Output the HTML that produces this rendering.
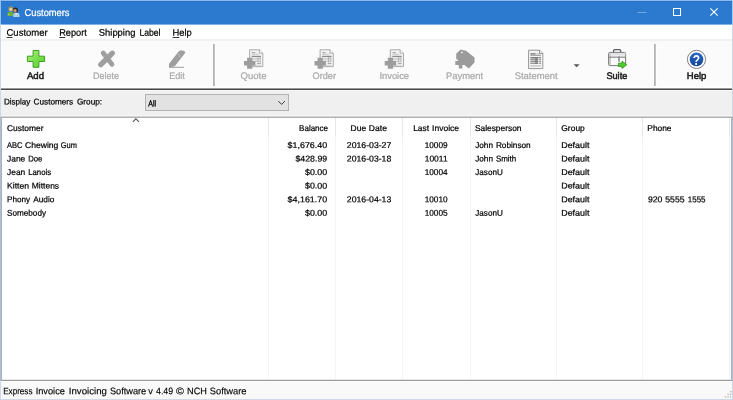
<!DOCTYPE html>
<html lang="en">
<head>
<meta charset="utf-8">
<title>Customers</title>
<style>
html,body{margin:0;padding:0;background:#f0f0f0;}
body{width:733px;height:400px;overflow:hidden;font-family:"Liberation Sans",sans-serif;}
#win{position:relative;width:733px;height:400px;overflow:hidden;background:#f0f0f0;}
#win div,#win svg{position:absolute;}
#titlebar{left:0;top:0;width:733px;height:25px;box-sizing:border-box;border-left:1px solid #93c1f2;border-right:1px solid #a3cbf5;background:linear-gradient(#8abaf0 0,#8abaf0 1px,#2a72c6 1px,#2a72c6 2px,#2c7ad0 2px,#2c7ad0 24px,#7fb0e6 24px);}
#menubar{left:1px;top:25px;width:731px;height:14px;background:#fff;}
#toolbar{left:1px;top:39px;width:731px;height:49px;background:linear-gradient(#f1f1f1 0,#f1f1f1 1px,#f2f2f2 1px,#f2f2f2 2px,#fafafa 2px,#fafafa 3px,#fbfbfb 3px,#fbfbfb 47px,#fdfdfd 47px,#fff 48px);}
#tbline{left:1px;top:88px;width:731px;height:3px;background:linear-gradient(#9a9a9a 0,#9a9a9a 1px,#474747 1px,#474747 2px,#fafafa 2px);}
#filter{left:1px;top:91px;width:731px;height:25px;background:#f0f0f0;}
#combo{left:145px;top:94px;width:144px;height:17px;box-sizing:border-box;background:#e2e2e2;border:1px solid #b3b3b3;}
#list{left:1px;top:116px;width:731px;height:265px;box-sizing:border-box;background:#fff;border-left:1px solid #a4b2c0;border-right:1px solid #a6b0bd;border-top:2px solid #b2b2b2;border-bottom:2px solid #9c9c9c;}
#listtop{left:1px;top:115px;width:731px;height:2px;background:linear-gradient(#f6f6f6 0,#f6f6f6 1px,#d2d2d2 1px);}
#listbot{left:2px;top:379px;width:729px;height:1px;background:#e8e8e8;}
.vs{top:118px;width:1px;height:261px;background:linear-gradient(#e6e6e9 0,#e6e6e9 18px,#f2f4f7 19px);}
#status{left:1px;top:381px;width:731px;height:18px;background:linear-gradient(#fdfdfd 0,#fdfdfd 1px,#f9f9f9 1px);}
.sep{top:44px;width:2px;height:42px;background:linear-gradient(90deg,#b1b1b1 0,#b1b1b1 1px,#c3c3c3 1px);box-shadow:-1px 0 #fefefe,1px 0 #fefefe;}
.bl{background:#cbd9ea;}
.bd{background:#afbfcf;}
</style>
</head>
<body>
<div id="win">
<div id="titlebar"></div>
<div id="menubar"></div>
<div id="toolbar"></div>
<div id="tbline"></div>
<div id="filter"></div>
<div id="combo"></div>
<div id="list"></div>
<div id="listtop"></div>
<div id="listbot"></div>
<div class="vs" style="left:268px"></div>
<div class="vs" style="left:335px"></div>
<div class="vs" style="left:402px"></div>
<div class="vs" style="left:470px"></div>
<div class="vs" style="left:556px"></div>
<div class="vs" style="left:642px"></div>
<div class="vs" style="left:729px"></div>
<div id="status"></div>
<div class="sep" style="left:213px"></div>
<div class="sep" style="left:654px"></div>
<!-- window borders -->
<div class="bl" style="left:0;top:24px;width:1px;height:376px"></div>
<div class="bl" style="left:732px;top:24px;width:1px;height:376px"></div>
<div class="bl" style="left:0;top:399px;width:733px;height:1px"></div>
<div class="bd" style="left:0;top:117px;width:1px;height:264px"></div>
<div class="bd" style="left:732px;top:117px;width:1px;height:264px"></div>
<svg id="icons" width="733" height="400" viewBox="0 0 733 400" style="left:0;top:0;will-change:transform">
<defs>
<linearGradient id="gplus" x1="0" y1="0" x2="1" y2="1">
<stop offset="0" stop-color="#b6f290"/><stop offset="0.45" stop-color="#7fe050"/><stop offset="1" stop-color="#55cf2c"/>
</linearGradient>
<linearGradient id="ghelp" x1="0" y1="0" x2="0" y2="1">
<stop offset="0" stop-color="#2a68c4"/><stop offset="1" stop-color="#134599"/>
</linearGradient>
</defs>
<!-- title icon: two people -->
<g id="ic-title">
<path d="M7.5 15.9 L7.5 13.4 Q7.5 11.4 10.4 11.4 Q13.3 11.4 13.3 13.4 L13.3 15.9 Z" fill="#6cae3d"/>
<path d="M8.4 15.4 L8.4 13 L10 14.4 Z" fill="#98d06a"/>
<circle cx="10.7" cy="8.8" r="2.7" fill="#808d70"/>
<circle cx="10.9" cy="9.4" r="1.7" fill="#e6cda4"/>
<path d="M13.2 17.1 L13.2 14.8 Q13.2 12.8 16.3 12.8 Q19.5 12.8 19.5 14.8 L19.5 17.1 Z" fill="#aecbe9"/>
<path d="M15 13 L16.3 15 L17.6 13 Z" fill="#e9f1fa"/>
<circle cx="15.4" cy="10" r="2.6" fill="#2b2623"/>
<circle cx="15" cy="10.7" r="1.7" fill="#cf9566"/>
</g>
<!-- window controls -->
<g id="ic-controls" fill="none" stroke="#fff" stroke-width="1">
<path d="M637.5 12.5 H646.5" stroke="#6fa5e0"/>
<rect x="673.5" y="8.5" width="7" height="7"/>
<path d="M710.3 8.3 L717.7 15.7 M717.7 8.3 L710.3 15.7" stroke-width="1.1"/>
</g>
<!-- Add: green plus -->
<path id="ic-add" d="M33.1 50.5 H38.9 V56.2 H44.6 V61.5 H38.9 V67.3 H33.1 V61.5 H27.4 V56.2 H33.1 Z" fill="url(#gplus)" stroke="#3f9f22" stroke-width="1" stroke-linejoin="round"/>
<!-- Delete: gray X -->
<g id="ic-del" stroke="#9f9f9f" stroke-linecap="round" fill="none">
<path d="M103.2 53 L112 64.4" stroke-width="4.8"/>
<path d="M112.4 53.2 L105.5 60 L100.8 64.6" stroke-width="5.3"/>
</g>
<!-- Edit: gray pencil -->
<g id="ic-edit" fill="#9f9f9f">
<path d="M178.8 51.2 L181 50.2 L184.4 50.9 L185.3 52.8 L174.8 66.3 L169 67.8 L169 63.7 Z"/>
<rect x="169" y="66.8" width="15" height="1"/>
<circle cx="178.8" cy="54.3" r="0.55" fill="#e0e0e0"/>
<circle cx="179.6" cy="56" r="0.55" fill="#e0e0e0"/>
</g>
<!-- document + plus (Quote / Order / Invoice) -->
<g id="ic-quote" transform="translate(249.2,49.4)">
<path d="M0.4 0.4 H10.2 L13.6 3.8 V17.2 H0.4 Z" fill="#f3f3f3" stroke="#a3a3a3" stroke-width="0.9"/>
<path d="M10.2 0.4 V3.8 H13.6" fill="#fdfdfd" stroke="#9a9a9a" stroke-width="0.8"/>
<rect x="2.6" y="2.8" width="3.4" height="1" fill="#9a9a9a"/><rect x="2.6" y="4.4" width="6.6" height="0.8" fill="#b8b8b8"/>
<rect x="2.4" y="6.4" width="9.4" height="1.2" fill="#8c8c8c"/>
<rect x="2.4" y="8.4" width="9.4" height="0.8" fill="#c4c4c4"/><rect x="2.4" y="10" width="9.4" height="0.8" fill="#c4c4c4"/><rect x="2.4" y="11.6" width="9.4" height="0.8" fill="#c4c4c4"/>
<rect x="8.4" y="7.6" width="0.8" height="5.6" fill="#a8a8a8"/><rect x="10.6" y="7.6" width="0.8" height="5.6" fill="#b4b4b4"/>
<rect x="8" y="13.6" width="3.6" height="0.9" fill="#a0a0a0"/><rect x="2.4" y="15.4" width="9.4" height="0.7" fill="#c8c8c8"/>
<path d="M-2.1 8.4 H3.1 V11.7 H6.2 V16.2 H3.1 V19.4 H-2.1 V16.2 H-5.2 V11.7 H-2.1 Z" fill="#9d9d9d"/>
</g>
<g id="ic-order" transform="translate(319.7,49.4)">
<path d="M0.4 0.4 H10.2 L13.6 3.8 V17.2 H0.4 Z" fill="#f3f3f3" stroke="#a3a3a3" stroke-width="0.9"/>
<path d="M10.2 0.4 V3.8 H13.6" fill="#fdfdfd" stroke="#9a9a9a" stroke-width="0.8"/>
<rect x="2.6" y="2.8" width="3.4" height="1" fill="#9a9a9a"/><rect x="2.6" y="4.4" width="6.6" height="0.8" fill="#b8b8b8"/>
<rect x="2.4" y="6.4" width="9.4" height="1.2" fill="#8c8c8c"/>
<rect x="2.4" y="8.4" width="9.4" height="0.8" fill="#c4c4c4"/><rect x="2.4" y="10" width="9.4" height="0.8" fill="#c4c4c4"/><rect x="2.4" y="11.6" width="9.4" height="0.8" fill="#c4c4c4"/>
<rect x="8.4" y="7.6" width="0.8" height="5.6" fill="#a8a8a8"/><rect x="10.6" y="7.6" width="0.8" height="5.6" fill="#b4b4b4"/>
<rect x="8" y="13.6" width="3.6" height="0.9" fill="#a0a0a0"/><rect x="2.4" y="15.4" width="9.4" height="0.7" fill="#c8c8c8"/>
<path d="M-2.1 8.4 H3.1 V11.7 H6.2 V16.2 H3.1 V19.4 H-2.1 V16.2 H-5.2 V11.7 H-2.1 Z" fill="#9d9d9d"/>
</g>
<g id="ic-invoice" transform="translate(389.9,49.4)">
<path d="M0.4 0.4 H10.2 L13.6 3.8 V17.2 H0.4 Z" fill="#f3f3f3" stroke="#a3a3a3" stroke-width="0.9"/>
<path d="M10.2 0.4 V3.8 H13.6" fill="#fdfdfd" stroke="#9a9a9a" stroke-width="0.8"/>
<rect x="2.6" y="2.8" width="3.4" height="1" fill="#9a9a9a"/><rect x="2.6" y="4.4" width="6.6" height="0.8" fill="#b8b8b8"/>
<rect x="2.4" y="6.4" width="9.4" height="1.2" fill="#8c8c8c"/>
<rect x="2.4" y="8.4" width="9.4" height="0.8" fill="#c4c4c4"/><rect x="2.4" y="10" width="9.4" height="0.8" fill="#c4c4c4"/><rect x="2.4" y="11.6" width="9.4" height="0.8" fill="#c4c4c4"/>
<rect x="8.4" y="7.6" width="0.8" height="5.6" fill="#a8a8a8"/><rect x="10.6" y="7.6" width="0.8" height="5.6" fill="#b4b4b4"/>
<rect x="8" y="13.6" width="3.6" height="0.9" fill="#a0a0a0"/><rect x="2.4" y="15.4" width="9.4" height="0.7" fill="#c8c8c8"/>
<path d="M-2.1 8.4 H3.1 V11.7 H6.2 V16.2 H3.1 V19.4 H-2.1 V16.2 H-5.2 V11.7 H-2.1 Z" fill="#9d9d9d"/>
</g>
<!-- Payment: gray tag + plus -->
<g id="ic-payment" fill="#9b9b9b">
<path d="M460.6 49.6 L466 50.8 L474.5 57.6 L474.5 62.4 L468.8 68.5 L464.4 65 L462.4 65 L462.4 68.5 L458.8 68.5 L458.8 64.9 L455.3 64.9 L455.3 61 L458.6 61 L456.2 58.8 L456.2 53.8 Z"/>
<circle cx="461.9" cy="52.4" r="0.9" fill="#f4f4f4"/>
</g>
<!-- Statement: document -->
<g id="ic-statement" transform="translate(528.2,49.8)">
<path d="M0.4 0.4 H11.4 L14.6 3.6 V18.8 H0.4 Z" fill="#f5f5f5" stroke="#8a8a8a" stroke-width="0.9"/>
<path d="M11.4 0.4 V3.6 H14.6" fill="#fff" stroke="#7a7a7a" stroke-width="0.9"/>
<rect x="2.2" y="3.5" width="5.2" height="1.2" fill="#666"/><rect x="7.4" y="3.7" width="5.2" height="1" fill="#b0b0b0"/>
<rect x="2.2" y="5.2" width="10.6" height="0.9" fill="#a0a0a0"/>
<rect x="2.2" y="7.3" width="10.6" height="6.9" fill="#d6d6d6"/>
<rect x="2.2" y="7.3" width="10.6" height="1.2" fill="#747474"/>
<rect x="2.2" y="9.3" width="10.6" height="1.1" fill="#909090"/><rect x="2.2" y="11.2" width="10.6" height="1.1" fill="#909090"/><rect x="2.2" y="13.1" width="10.6" height="1.1" fill="#999"/>
<rect x="7" y="7.6" width="2.4" height="6.6" fill="#6a6a6a" opacity="0.6"/><rect x="10.2" y="7.6" width="0.9" height="6.6" fill="#fff" opacity="0.85"/>
<rect x="2.2" y="15.7" width="10.6" height="0.9" fill="#aaa"/>
</g>
<path id="ic-dd" d="M573.6 64.2 H579.6 L576.6 67.2 Z" fill="#555"/>
<!-- Suite: briefcase + green arrow -->
<g id="ic-suite">
<path d="M613.6 52.4 V50.6 Q613.6 49.6 614.6 49.6 H619.6 Q620.6 49.6 620.6 50.6 V52.4" fill="none" stroke="#5a5f6a" stroke-width="1.3"/>
<rect x="608.6" y="52.4" width="17" height="13.2" rx="1.2" fill="#fbfbfb" stroke="#6c6c6c" stroke-width="0.9"/>
<rect x="611" y="53" width="14.2" height="3.8" fill="#ececec"/>
<rect x="609" y="52.8" width="2" height="12.4" fill="#c9c9c9"/>
<path d="M609 54 H625.4" stroke="#d9d9d9" stroke-width="1"/>
<path d="M609.2 57.2 H625.4" stroke="#7a7a7a" stroke-width="1"/>
<rect x="618.2" y="56.4" width="1.6" height="5.4" fill="#8a8a8a"/>
<path d="M618.4 63.2 H622 V61.2 L626.8 64.8 L622 68.4 V66.4 H618.4 Z" fill="#4fd02c" stroke="#2b8f16" stroke-width="0.8" stroke-linejoin="round"/>
</g>
<!-- Help: blue circle -->
<g id="ic-help">
<circle cx="696.5" cy="59.4" r="9.1" fill="#fff" stroke="#5d6068" stroke-width="0.8"/>
<circle cx="696.5" cy="59.4" r="6.8" fill="url(#ghelp)"/>
<text transform="translate(696.45 64.7) scale(0.82 1)" x="0" y="0" text-anchor="middle" font-family="Liberation Sans, sans-serif" font-weight="700" font-size="14.6" fill="#fff">?</text>
</g>
<!-- menu mnemonics underlines -->
<g fill="#222"><rect x="6.6" y="37.1" width="5.9" height="0.9"/><rect x="59.3" y="37.1" width="5.9" height="0.9"/><rect x="172.6" y="37.1" width="6.7" height="0.9"/></g>
<!-- combo chevron, sort arrow, grip -->
<path d="M278.3 101.1 L281.6 104.4 L284.9 101.1" fill="none" stroke="#3c3c3c" stroke-width="1"/>
<path d="M132.8 121.9 L135.9 118.9 L139 121.9" fill="none" stroke="#5a5a5a" stroke-width="1.15"/>
<g fill="#b9b9b9">
<rect x="730" y="391" width="1.4" height="1.4"/>
<rect x="727.4" y="393.6" width="1.4" height="1.4"/><rect x="730" y="393.6" width="1.4" height="1.4"/>
<rect x="724.8" y="396.2" width="1.4" height="1.4"/><rect x="727.4" y="396.2" width="1.4" height="1.4"/><rect x="730" y="396.2" width="1.4" height="1.4"/>
</g>
</svg>

<svg id="texts" width="733" height="400" viewBox="0 0 733 400" style="left:0;top:0;will-change:transform" font-family="Liberation Sans, sans-serif" xml:space="preserve">
<text x="24.60" y="16.10" font-size="10" font-weight="400" fill="#fff" stroke="#fff" stroke-width="0.22" textLength="44.90" lengthAdjust="spacingAndGlyphs" transform="rotate(0.04 47.05 16.10)">Customers</text>
<text x="6.50" y="35.70" font-size="9.5" font-weight="400" fill="#000" stroke="#000" stroke-width="0.22" textLength="41.20" lengthAdjust="spacingAndGlyphs" transform="rotate(0.04 27.10 35.70)">Customer</text>
<text x="59.20" y="35.70" font-size="9.5" font-weight="400" fill="#000" stroke="#000" stroke-width="0.22" textLength="27.60" lengthAdjust="spacingAndGlyphs" transform="rotate(0.04 73.00 35.70)">Report</text>
<g font-size="9.5" font-weight="400" fill="#000" stroke="#000" stroke-width="0.22"><text x="98.80" y="35.70" textLength="36.60" lengthAdjust="spacingAndGlyphs" transform="rotate(0.04 117.10 35.70)">Shipping</text> <text x="139.40" y="35.70" textLength="21.10" lengthAdjust="spacingAndGlyphs" transform="rotate(0.04 149.95 35.70)">Label</text></g>
<text x="172.50" y="35.70" font-size="9.5" font-weight="400" fill="#000" stroke="#000" stroke-width="0.22" textLength="19.20" lengthAdjust="spacingAndGlyphs" transform="rotate(0.04 182.10 35.70)">Help</text>
<text x="27.00" y="78.90" font-size="9.5" font-weight="400" fill="#1a1a1a" stroke="#1a1a1a" stroke-width="0.5" textLength="17.00" lengthAdjust="spacingAndGlyphs" transform="rotate(0.04 35.50 78.90)">Add</text>
<text x="93.10" y="78.90" font-size="9.5" font-weight="400" fill="#a9a9a9" stroke="#a9a9a9" stroke-width="0.22" textLength="25.90" lengthAdjust="spacingAndGlyphs" transform="rotate(0.04 106.05 78.90)">Delete</text>
<text x="169.20" y="78.90" font-size="9.5" font-weight="400" fill="#a9a9a9" stroke="#a9a9a9" stroke-width="0.22" textLength="15.70" lengthAdjust="spacingAndGlyphs" transform="rotate(0.04 177.05 78.90)">Edit</text>
<text x="240.50" y="78.90" font-size="9.5" font-weight="400" fill="#a9a9a9" stroke="#a9a9a9" stroke-width="0.22" textLength="26.00" lengthAdjust="spacingAndGlyphs" transform="rotate(0.04 253.50 78.90)">Quote</text>
<text x="312.50" y="78.90" font-size="9.5" font-weight="400" fill="#a9a9a9" stroke="#a9a9a9" stroke-width="0.22" textLength="23.50" lengthAdjust="spacingAndGlyphs" transform="rotate(0.04 324.25 78.90)">Order</text>
<text x="379.40" y="78.90" font-size="9.5" font-weight="400" fill="#a9a9a9" stroke="#a9a9a9" stroke-width="0.22" textLength="29.70" lengthAdjust="spacingAndGlyphs" transform="rotate(0.04 394.25 78.90)">Invoice</text>
<text x="446.00" y="78.90" font-size="9.5" font-weight="400" fill="#a9a9a9" stroke="#a9a9a9" stroke-width="0.22" textLength="37.20" lengthAdjust="spacingAndGlyphs" transform="rotate(0.04 464.60 78.90)">Payment</text>
<text x="514.70" y="78.90" font-size="9.5" font-weight="400" fill="#a9a9a9" stroke="#a9a9a9" stroke-width="0.22" textLength="43.00" lengthAdjust="spacingAndGlyphs" transform="rotate(0.04 536.20 78.90)">Statement</text>
<text x="606.40" y="78.90" font-size="9.5" font-weight="400" fill="#1a1a1a" stroke="#1a1a1a" stroke-width="0.5" textLength="20.90" lengthAdjust="spacingAndGlyphs" transform="rotate(0.04 616.85 78.90)">Suite</text>
<text x="686.80" y="78.90" font-size="9.5" font-weight="400" fill="#1a1a1a" stroke="#1a1a1a" stroke-width="0.5" textLength="19.50" lengthAdjust="spacingAndGlyphs" transform="rotate(0.04 696.55 78.90)">Help</text>
<g font-size="8.4" font-weight="400" fill="#000" stroke="#000" stroke-width="0.22"><text x="3.90" y="104.60" textLength="26.50" lengthAdjust="spacingAndGlyphs" transform="rotate(0.04 17.15 104.60)">Display</text> <text x="33.60" y="104.60" textLength="39.60" lengthAdjust="spacingAndGlyphs" transform="rotate(0.04 53.40 104.60)">Customers</text> <text x="76.90" y="104.60" textLength="25.20" lengthAdjust="spacingAndGlyphs" transform="rotate(0.04 89.50 104.60)">Group:</text></g>
<text x="148.30" y="106.30" font-size="8.4" font-weight="400" fill="#000" stroke="#000" stroke-width="0.35" textLength="7.70" lengthAdjust="spacingAndGlyphs" transform="rotate(0.04 152.15 106.30)">All</text>
<text x="7.00" y="131.00" font-size="8.4" font-weight="400" fill="#000" stroke="#000" stroke-width="0.22" textLength="36.50" lengthAdjust="spacingAndGlyphs" transform="rotate(0.04 25.25 131.00)">Customer</text>
<text x="299.10" y="131.00" font-size="8.4" font-weight="400" fill="#000" stroke="#000" stroke-width="0.22" textLength="28.90" lengthAdjust="spacingAndGlyphs" transform="rotate(0.04 313.55 131.00)">Balance</text>
<g font-size="8.4" font-weight="400" fill="#000" stroke="#000" stroke-width="0.22"><text x="350.60" y="131.00" textLength="15.50" lengthAdjust="spacingAndGlyphs" transform="rotate(0.04 358.35 131.00)">Due</text> <text x="368.85" y="131.00" textLength="18.05" lengthAdjust="spacingAndGlyphs" transform="rotate(0.04 377.88 131.00)">Date</text></g>
<g font-size="8.4" font-weight="400" fill="#000" stroke="#000" stroke-width="0.22"><text x="413.20" y="131.00" textLength="15.80" lengthAdjust="spacingAndGlyphs" transform="rotate(0.04 421.10 131.00)">Last</text> <text x="432.10" y="131.00" textLength="26.90" lengthAdjust="spacingAndGlyphs" transform="rotate(0.04 445.55 131.00)">Invoice</text></g>
<text x="474.90" y="131.00" font-size="8.4" font-weight="400" fill="#000" stroke="#000" stroke-width="0.22" textLength="46.60" lengthAdjust="spacingAndGlyphs" transform="rotate(0.04 498.20 131.00)">Salesperson</text>
<text x="561.30" y="131.00" font-size="8.4" font-weight="400" fill="#000" stroke="#000" stroke-width="0.22" textLength="23.50" lengthAdjust="spacingAndGlyphs" transform="rotate(0.04 573.05 131.00)">Group</text>
<text x="647.30" y="131.00" font-size="8.4" font-weight="400" fill="#000" stroke="#000" stroke-width="0.22" textLength="24.20" lengthAdjust="spacingAndGlyphs" transform="rotate(0.04 659.40 131.00)">Phone</text>
<g font-size="9.5" font-weight="400" fill="#000" stroke="#000" stroke-width="0.15"><text x="3.20" y="394.20" textLength="29.30" lengthAdjust="spacingAndGlyphs" transform="rotate(0.04 17.85 394.20)">Express</text> <text x="35.70" y="394.20" textLength="29.20" lengthAdjust="spacingAndGlyphs" transform="rotate(0.04 50.30 394.20)">Invoice</text> <text x="68.80" y="394.20" textLength="38.10" lengthAdjust="spacingAndGlyphs" transform="rotate(0.04 87.85 394.20)">Invoicing</text> <text x="109.90" y="394.20" textLength="36.35" lengthAdjust="spacingAndGlyphs" transform="rotate(0.04 128.07 394.20)">Software</text> <text x="148.30" y="394.20" textLength="4.60" lengthAdjust="spacingAndGlyphs" transform="rotate(0.04 150.60 394.20)">v</text> <text x="156.00" y="394.20" textLength="17.10" lengthAdjust="spacingAndGlyphs" transform="rotate(0.04 164.55 394.20)">4.49</text> <text x="176.10" y="394.20" textLength="7.90" lengthAdjust="spacingAndGlyphs" transform="rotate(0.04 180.05 394.20)">©</text> <text x="187.10" y="394.20" textLength="19.90" lengthAdjust="spacingAndGlyphs" transform="rotate(0.04 197.05 394.20)">NCH</text> <text x="209.80" y="394.20" textLength="36.70" lengthAdjust="spacingAndGlyphs" transform="rotate(0.04 228.15 394.20)">Software</text></g>
<g font-size="8.4" font-weight="400" fill="#000" stroke="#000" stroke-width="0.22"><text x="7.06" y="147.90" textLength="15.49" lengthAdjust="spacingAndGlyphs" transform="rotate(0.04 14.80 147.90)">ABC</text> <text x="24.95" y="147.90" textLength="33.40" lengthAdjust="spacingAndGlyphs" transform="rotate(0.04 41.65 147.90)">Chewing</text> <text x="60.75" y="147.90" textLength="16.15" lengthAdjust="spacingAndGlyphs" transform="rotate(0.04 68.83 147.90)">Gum</text></g>
<text x="287.60" y="147.90" font-size="8.4" font-weight="400" fill="#000" stroke="#000" stroke-width="0.22" textLength="39.60" lengthAdjust="spacingAndGlyphs" transform="rotate(0.04 307.40 147.90)">$1,676.40</text>
<text x="346.80" y="147.90" font-size="8.4" font-weight="400" fill="#000" stroke="#000" stroke-width="0.22" textLength="44.50" lengthAdjust="spacingAndGlyphs" transform="rotate(0.04 369.05 147.90)">2016-03-27</text>
<text x="424.70" y="147.90" font-size="8.4" font-weight="400" fill="#000" stroke="#000" stroke-width="0.22" textLength="22.90" lengthAdjust="spacingAndGlyphs" transform="rotate(0.04 436.15 147.90)">10009</text>
<g font-size="8.4" font-weight="400" fill="#000" stroke="#000" stroke-width="0.22"><text x="475.20" y="147.90" textLength="17.80" lengthAdjust="spacingAndGlyphs" transform="rotate(0.04 484.10 147.90)">John</text> <text x="495.90" y="147.90" textLength="34.80" lengthAdjust="spacingAndGlyphs" transform="rotate(0.04 513.30 147.90)">Robinson</text></g>
<text x="561.20" y="147.90" font-size="8.4" font-weight="400" fill="#000" stroke="#000" stroke-width="0.22" textLength="28.30" lengthAdjust="spacingAndGlyphs" transform="rotate(0.04 575.35 147.90)">Default</text>
<g font-size="8.4" font-weight="400" fill="#000" stroke="#000" stroke-width="0.22"><text x="7.06" y="161.48" textLength="18.24" lengthAdjust="spacingAndGlyphs" transform="rotate(0.04 16.18 161.48)">Jane</text> <text x="28.20" y="161.48" textLength="14.20" lengthAdjust="spacingAndGlyphs" transform="rotate(0.04 35.30 161.48)">Doe</text></g>
<text x="295.40" y="161.48" font-size="8.4" font-weight="400" fill="#000" stroke="#000" stroke-width="0.22" textLength="31.80" lengthAdjust="spacingAndGlyphs" transform="rotate(0.04 311.30 161.48)">$428.99</text>
<text x="346.80" y="161.48" font-size="8.4" font-weight="400" fill="#000" stroke="#000" stroke-width="0.22" textLength="44.50" lengthAdjust="spacingAndGlyphs" transform="rotate(0.04 369.05 161.48)">2016-03-18</text>
<text x="424.70" y="161.48" font-size="8.4" font-weight="400" fill="#000" stroke="#000" stroke-width="0.22" textLength="22.90" lengthAdjust="spacingAndGlyphs" transform="rotate(0.04 436.15 161.48)">10011</text>
<g font-size="8.4" font-weight="400" fill="#000" stroke="#000" stroke-width="0.22"><text x="475.20" y="161.48" textLength="17.80" lengthAdjust="spacingAndGlyphs" transform="rotate(0.04 484.10 161.48)">John</text> <text x="495.90" y="161.48" textLength="20.30" lengthAdjust="spacingAndGlyphs" transform="rotate(0.04 506.05 161.48)">Smith</text></g>
<text x="561.20" y="161.48" font-size="8.4" font-weight="400" fill="#000" stroke="#000" stroke-width="0.22" textLength="28.30" lengthAdjust="spacingAndGlyphs" transform="rotate(0.04 575.35 161.48)">Default</text>
<g font-size="8.4" font-weight="400" fill="#000" stroke="#000" stroke-width="0.22"><text x="7.06" y="175.06" textLength="18.24" lengthAdjust="spacingAndGlyphs" transform="rotate(0.04 16.18 175.06)">Jean</text> <text x="28.20" y="175.06" textLength="22.95" lengthAdjust="spacingAndGlyphs" transform="rotate(0.04 39.67 175.06)">Lanois</text></g>
<text x="305.00" y="175.06" font-size="8.4" font-weight="400" fill="#000" stroke="#000" stroke-width="0.22" textLength="22.20" lengthAdjust="spacingAndGlyphs" transform="rotate(0.04 316.10 175.06)">$0.00</text>
<text x="424.70" y="175.06" font-size="8.4" font-weight="400" fill="#000" stroke="#000" stroke-width="0.22" textLength="22.90" lengthAdjust="spacingAndGlyphs" transform="rotate(0.04 436.15 175.06)">10004</text>
<g font-size="8.4" font-weight="400" fill="#000" stroke="#000" stroke-width="0.22"><text x="475.30" y="175.06" textLength="27.50" lengthAdjust="spacingAndGlyphs" transform="rotate(0.04 489.05 175.06)">JasonU</text></g>
<text x="561.20" y="175.06" font-size="8.4" font-weight="400" fill="#000" stroke="#000" stroke-width="0.22" textLength="28.30" lengthAdjust="spacingAndGlyphs" transform="rotate(0.04 575.35 175.06)">Default</text>
<g font-size="8.4" font-weight="400" fill="#000" stroke="#000" stroke-width="0.22"><text x="7.06" y="188.64" textLength="22.04" lengthAdjust="spacingAndGlyphs" transform="rotate(0.04 18.08 188.64)">Kitten</text> <text x="31.80" y="188.64" textLength="27.30" lengthAdjust="spacingAndGlyphs" transform="rotate(0.04 45.45 188.64)">Mittens</text></g>
<text x="305.00" y="188.64" font-size="8.4" font-weight="400" fill="#000" stroke="#000" stroke-width="0.22" textLength="22.20" lengthAdjust="spacingAndGlyphs" transform="rotate(0.04 316.10 188.64)">$0.00</text>
<text x="561.20" y="188.64" font-size="8.4" font-weight="400" fill="#000" stroke="#000" stroke-width="0.22" textLength="28.30" lengthAdjust="spacingAndGlyphs" transform="rotate(0.04 575.35 188.64)">Default</text>
<g font-size="8.4" font-weight="400" fill="#000" stroke="#000" stroke-width="0.22"><text x="7.06" y="202.22" textLength="23.14" lengthAdjust="spacingAndGlyphs" transform="rotate(0.04 18.63 202.22)">Phony</text> <text x="33.25" y="202.22" textLength="21.15" lengthAdjust="spacingAndGlyphs" transform="rotate(0.04 43.83 202.22)">Audio</text></g>
<text x="287.60" y="202.22" font-size="8.4" font-weight="400" fill="#000" stroke="#000" stroke-width="0.22" textLength="39.60" lengthAdjust="spacingAndGlyphs" transform="rotate(0.04 307.40 202.22)">$4,161.70</text>
<text x="346.80" y="202.22" font-size="8.4" font-weight="400" fill="#000" stroke="#000" stroke-width="0.22" textLength="44.50" lengthAdjust="spacingAndGlyphs" transform="rotate(0.04 369.05 202.22)">2016-04-13</text>
<text x="424.70" y="202.22" font-size="8.4" font-weight="400" fill="#000" stroke="#000" stroke-width="0.22" textLength="22.90" lengthAdjust="spacingAndGlyphs" transform="rotate(0.04 436.15 202.22)">10010</text>
<text x="561.20" y="202.22" font-size="8.4" font-weight="400" fill="#000" stroke="#000" stroke-width="0.22" textLength="28.30" lengthAdjust="spacingAndGlyphs" transform="rotate(0.04 575.35 202.22)">Default</text>
<g font-size="8.4" font-weight="400" fill="#000" stroke="#000" stroke-width="0.22"><text x="647.90" y="202.22" textLength="14.50" lengthAdjust="spacingAndGlyphs" transform="rotate(0.04 655.15 202.22)">920</text> <text x="665.30" y="202.22" textLength="19.20" lengthAdjust="spacingAndGlyphs" transform="rotate(0.04 674.90 202.22)">5555</text> <text x="687.80" y="202.22" textLength="17.70" lengthAdjust="spacingAndGlyphs" transform="rotate(0.04 696.65 202.22)">1555</text></g>
<g font-size="8.4" font-weight="400" fill="#000" stroke="#000" stroke-width="0.22"><text x="7.06" y="215.80" textLength="38.94" lengthAdjust="spacingAndGlyphs" transform="rotate(0.04 26.53 215.80)">Somebody</text></g>
<text x="305.00" y="215.80" font-size="8.4" font-weight="400" fill="#000" stroke="#000" stroke-width="0.22" textLength="22.20" lengthAdjust="spacingAndGlyphs" transform="rotate(0.04 316.10 215.80)">$0.00</text>
<text x="424.70" y="215.80" font-size="8.4" font-weight="400" fill="#000" stroke="#000" stroke-width="0.22" textLength="22.90" lengthAdjust="spacingAndGlyphs" transform="rotate(0.04 436.15 215.80)">10005</text>
<g font-size="8.4" font-weight="400" fill="#000" stroke="#000" stroke-width="0.22"><text x="475.30" y="215.80" textLength="27.50" lengthAdjust="spacingAndGlyphs" transform="rotate(0.04 489.05 215.80)">JasonU</text></g>
<text x="561.20" y="215.80" font-size="8.4" font-weight="400" fill="#000" stroke="#000" stroke-width="0.22" textLength="28.30" lengthAdjust="spacingAndGlyphs" transform="rotate(0.04 575.35 215.80)">Default</text>
</svg>
</div>
</body>
</html>
